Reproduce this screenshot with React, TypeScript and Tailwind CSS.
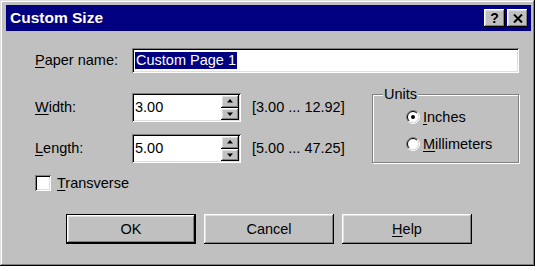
import React from "react"

const raised =
  "bg-[#c0c0c0] shadow-[inset_-1px_-1px_#000,inset_1px_1px_#fff,inset_-2px_-2px_#808080,inset_2px_2px_#dfdfdf]"
const sunken =
  "bg-white shadow-[inset_1px_1px_#808080,inset_-1px_-1px_#fff,inset_2px_2px_#000,inset_-2px_-2px_#dfdfdf]"

function Key({ children }: { children: React.ReactNode }) {
  return <span className="underline underline-offset-[2px] decoration-1">{children}</span>
}

function Radio({ checked }: { checked?: boolean }) {
  return (
    <svg width="14" height="14" viewBox="0 0 14 14" className="shrink-0">
      <circle cx="7" cy="7" r="5.5" fill="#fff" />
      <path d="M2.4,11.6 A6.5,6.5 0 0 1 11.6,2.4" stroke="#808080" fill="none" />
      <path d="M11.6,2.4 A6.5,6.5 0 0 1 2.4,11.6" stroke="#fff" fill="none" />
      <path d="M3.1,10.9 A5.5,5.5 0 0 1 10.9,3.1" stroke="#000" fill="none" />
      <path d="M10.9,3.1 A5.5,5.5 0 0 1 3.1,10.9" stroke="#dfdfdf" fill="none" />
      {checked && <circle cx="7" cy="7" r="2" fill="#000" />}
    </svg>
  )
}

function Spin() {
  return (
    <div className="flex flex-col w-[18px] h-full">
      <div className={`${raised} flex-1 flex items-center justify-center`}>
        <svg width="6" height="4" viewBox="0 0 6 4">
          <path d="M3,0 L6,3.5 L0,3.5 Z" fill="#000" />
        </svg>
      </div>
      <div className={`${raised} flex-1 flex items-center justify-center`}>
        <svg width="6" height="4" viewBox="0 0 6 4">
          <path d="M0,0.5 L6,0.5 L3,4 Z" fill="#000" />
        </svg>
      </div>
    </div>
  )
}

function SpinRow({
  label,
  value,
  range,
  className,
}: {
  label: React.ReactNode
  value: string
  range: string
  className?: string
}) {
  return (
    <div className={`flex items-center h-[29px] ${className ?? ""}`}>
      <div className="w-[97px]">{label}</div>
      <div className={`${sunken} w-[109px] h-full flex items-stretch p-[2px]`}>
        <div className="flex-1 pl-[1px] flex items-center">{value}</div>
        <Spin />
      </div>
      <div className="ml-[11px]">{range}</div>
    </div>
  )
}

function Button({
  children,
  primary,
}: {
  children: React.ReactNode
  primary?: boolean
}) {
  return (
    <div
      className={`w-[130px] h-[30px] ${primary ? "border border-black" : ""}`}
    >
      <div className={`${raised} w-full h-full flex items-center justify-center`}>
        {children}
      </div>
    </div>
  )
}

export default function App() {
  return (
    <div className="w-[537px] h-[271px] bg-white font-['Liberation_Sans',Arial,sans-serif] text-[14.5px] text-black leading-none">
      <div className="w-[535px] h-[266px] bg-[#c0c0c0] pl-[6px] pr-[4px] pt-[5px] flex flex-col shadow-[inset_-1px_-1px_#000,inset_1px_1px_#dfdfdf,inset_-2px_-2px_#808080,inset_2px_2px_#fff]">
        <div className="h-[26px] bg-[#000080] flex items-center pl-[4px] pr-[3px]">
          <span className="text-white font-bold text-[15.5px]">Custom Size</span>
          <div className="ml-auto flex gap-[2px]">
            <div className={`${raised} w-[21px] h-[18px] flex items-center justify-center font-bold text-[14px]`}>
              ?
            </div>
            <div className={`${raised} w-[21px] h-[18px] flex items-center justify-center`}>
              <svg width="10" height="9" viewBox="0 0 10 9">
                <path d="M1,0.5 L9,8.5 M9,0.5 L1,8.5" stroke="#000" strokeWidth="2" />
              </svg>
            </div>
          </div>
        </div>

        <div className="flex items-center mt-[17px] pl-[29px]">
          <div className="w-[97px]">
            <Key>P</Key>aper name:
          </div>
          <div className={`${sunken} w-[387px] h-[25px] flex items-center pl-[3px]`}>
            <span className="bg-[#000080] text-white leading-[17px] px-[1px]">Custom Page 1</span>
          </div>
        </div>

        <div className="flex mt-[20px] pl-[29px]">
          <div className="w-[337px]">
            <SpinRow label={<><Key>W</Key>idth:</>} value="3.00" range="[3.00 ... 12.92]" />
            <SpinRow
              className="mt-[12px]"
              label={<><Key>L</Key>ength:</>}
              value="5.00"
              range="[5.00 ... 47.25]"
            />
          </div>
          <div className="relative mt-[1px] w-[147px] h-[69px] border border-[#808080] shadow-[1px_1px_#fff,inset_1px_1px_#fff]">
            <span className="absolute left-[10px] -top-[8px] bg-[#c0c0c0] px-[1px]">Units</span>
            <div className="flex flex-col pl-[33px] pt-[15px] gap-[12px]">
              <div className="flex items-center gap-[3px]">
                <Radio checked />
                <span>
                  <Key>I</Key>nches
                </span>
              </div>
              <div className="flex items-center gap-[3px]">
                <Radio />
                <span>
                  <Key>M</Key>illimeters
                </span>
              </div>
            </div>
          </div>
        </div>

        <div className="flex items-center mt-[12px] pl-[29px]">
          <div className={`${sunken} w-[16px] h-[16px]`} />
          <span className="ml-[6px]">
            <Key>T</Key>ransverse
          </span>
        </div>

        <div className="flex gap-[8px] mt-[23px] pl-[60px]">
          <Button primary>OK</Button>
          <Button>Cancel</Button>
          <Button>
            <span>
              <Key>H</Key>elp
            </span>
          </Button>
        </div>
      </div>
    </div>
  )
}
